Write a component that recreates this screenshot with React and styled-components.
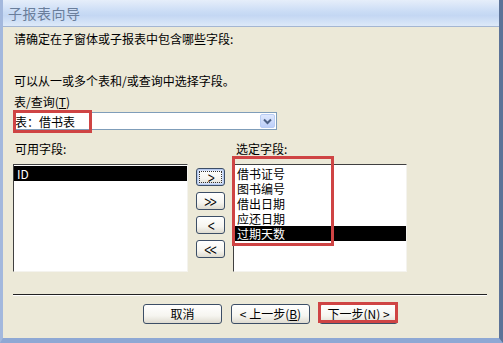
import React, { useState } from 'react';
import styled, { createGlobalStyle, css } from 'styled-components';

const GlobalStyle = createGlobalStyle`
  html, body {
    margin: 0;
    padding: 0;
    background: #ece9d8;
  }
  * {
    box-sizing: border-box;
  }
`;

const FONT = `"Noto Sans CJK SC", "Liberation Sans", sans-serif`;

const Window = styled.div`
  position: relative;
  display: flex;
  flex-direction: column;
  width: 503px;
  height: 343px;
  border-left: 3px solid #a3b8dd;
  border-right: 4px solid #5c7398;
  border-bottom: 5px solid #8ea8d4;
  font-family: ${FONT};
  font-size: 12px;
  color: #000;
  overflow: hidden;
`;

const TitleBar = styled.div`
  height: 27px;
  flex: none;
  display: flex;
  align-items: center;
  padding-left: 5px;
  background: linear-gradient(#e6eefa 0%, #cadcf5 45%, #c4d7f3 60%, #dde9f8 100%);
  border-bottom: 1px solid #a4b6d2;
  color: #6a7e9b;
  font-size: 14px;
  letter-spacing: 0.5px;
`;

const Body = styled.div`
  flex: 1;
  display: flex;
  flex-direction: column;
  padding: 4px 0 0 10px;
  background: #ece9d8;
`;

const Text = styled.div`
  line-height: 15px;
  height: 15px;
  margin-left: ${(p) => p.indent || 1}px;
  margin-top: ${(p) => p.top || 0}px;
  white-space: nowrap;
`;

const Combo = styled.div`
  display: flex;
  align-items: center;
  width: 264px;
  height: 18px;
  margin-top: 3px;
  background: #fff;
  border: 1px solid #7f9db9;
  padding-left: 1px;
`;

const ComboText = styled.span`
  flex: 1;
  line-height: 15px;
`;

const ComboArrow = styled.div`
  width: 15px;
  height: 14px;
  margin-right: 1px;
  display: flex;
  align-items: center;
  justify-content: center;
  border: 1px solid #b9cdf4;
  border-radius: 2px;
  background: linear-gradient(#dfe8fd, #bccff9);
`;

const Lists = styled.div`
  display: flex;
  gap: 8px;
  margin-top: 11px;
`;

const Column = styled.div`
  display: flex;
  flex-direction: column;
  width: ${(p) => p.w}px;
`;

const ListBox = styled.div`
  height: 108px;
  margin-top: 8px;
  background: #fff;
  border-top: 1px solid #404040;
  border-left: 1px solid #404040;
  border-right: 1px solid #f4f3ee;
  border-bottom: 1px solid #f4f3ee;
  padding-top: 1px;
`;

const Item = styled.div`
  height: 15px;
  line-height: 15px;
  padding-left: 3px;
  white-space: nowrap;
  ${(p) =>
    p.selected &&
    css`
      background: #000;
      color: #fff;
    `}
`;

const Movers = styled.div`
  display: flex;
  flex-direction: column;
  gap: 6px;
  padding-top: 27px;
`;

const XpButton = styled.button`
  width: ${(p) => p.w}px;
  height: ${(p) => p.h}px;
  padding: 0;
  font-family: ${FONT};
  font-size: 12px;
  line-height: 1;
  color: #000;
  border: 1px solid #3c4e66;
  border-radius: 3px;
  background: linear-gradient(#ffffff 0%, #f6f5f0 60%, #dedbd0 100%);
  display: flex;
  align-items: center;
  justify-content: center;
  ${(p) =>
    p.focused &&
    css`
      box-shadow: inset 0 0 0 1px #b4c8ee, inset 0 0 0 2px #d4e0f8;
      outline: 1px dotted #333;
      outline-offset: -4px;
    `}
`;

const Glyph = styled.span`
  font-family: "Liberation Sans", sans-serif;
  font-size: 15px;
  font-weight: 300;
  letter-spacing: -2px;
  margin-right: ${(p) => (p.double ? 2 : 0)}px;
  transform: scaleX(0.8);
`;

const Separator = styled.div`
  width: 474px;
  margin-top: 22px;
  border-top: 1px solid #222;
  border-bottom: 1px solid #fff;
`;

const Footer = styled.div`
  display: flex;
  gap: 9px;
  margin-top: 8px;
  margin-left: 130px;
`;

const Mark = styled.div`
  position: absolute;
  border: 3px solid #cf4444;
  pointer-events: none;
  left: ${(p) => p.x}px;
  top: ${(p) => p.y}px;
  width: ${(p) => p.w}px;
  height: ${(p) => p.h}px;
`;

const AVAILABLE = ['ID'];
const SELECTED = ['借书证号', '图书编号', '借出日期', '应还日期', '过期天数'];

export default function App() {
  const [leftSel] = useState('ID');
  const [rightSel] = useState('过期天数');

  return (
    <>
      <GlobalStyle />
      <Window>
        <TitleBar>子报表向导</TitleBar>
        <Body>
          <Text indent={1}>请确定在子窗体或子报表中包含哪些字段:</Text>
          <Text indent={1} top={27}>
            可以从一或多个表和/或查询中选择字段。
          </Text>
          <Text indent={1} top={6}>
            表/查询(<u>T</u>)
          </Text>
          <Combo>
            <ComboText>表：借书表</ComboText>
            <ComboArrow>
              <svg width="9" height="7" viewBox="0 0 9 7">
                <path d="M1 1.5 L4.5 5 L8 1.5" fill="none" stroke="#4d6185" strokeWidth="2" />
              </svg>
            </ComboArrow>
          </Combo>
          <Lists>
            <Column w={175}>
              <Text indent={2}>可用字段:</Text>
              <ListBox>
                {AVAILABLE.map((f) => (
                  <Item key={f} selected={f === leftSel}>
                    {f}
                  </Item>
                ))}
              </ListBox>
            </Column>
            <Movers>
              <XpButton w={29} h={18} focused>
                <Glyph>&gt;</Glyph>
              </XpButton>
              <XpButton w={29} h={18}>
                <Glyph double>&gt;&gt;</Glyph>
              </XpButton>
              <XpButton w={29} h={18}>
                <Glyph>&lt;</Glyph>
              </XpButton>
              <XpButton w={29} h={18}>
                <Glyph double>&lt;&lt;</Glyph>
              </XpButton>
            </Movers>
            <Column w={174}>
              <Text indent={3}>选定字段:</Text>
              <ListBox>
                {SELECTED.map((f) => (
                  <Item key={f} selected={f === rightSel}>
                    {f}
                  </Item>
                ))}
              </ListBox>
            </Column>
          </Lists>
          <Separator />
          <Footer>
            <XpButton w={79} h={20}>取消</XpButton>
            <XpButton w={79} h={20}>&lt; 上一步(<u>B</u>)</XpButton>
            <XpButton w={79} h={20}>下一步(<u>N</u>) &gt;</XpButton>
          </Footer>
        </Body>
        <Mark x={10} y={110} w={79} h={23} />
        <Mark x={229} y={156} w={102} h={90} />
        <Mark x={315} y={302} w={80} h={21} />
      </Window>
    </>
  );
}
